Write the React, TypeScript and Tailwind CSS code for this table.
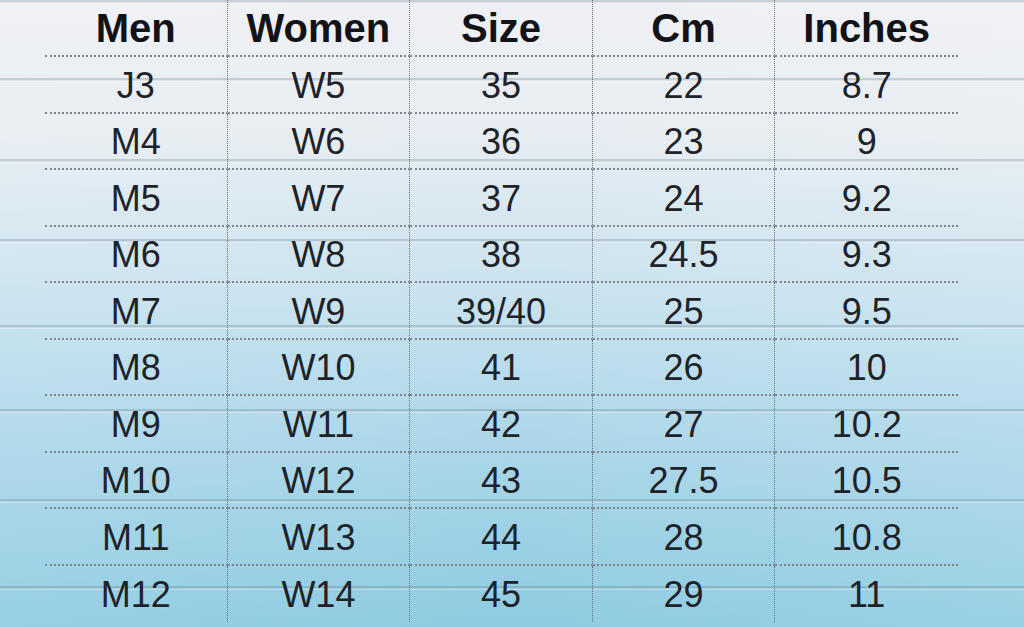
const headers = ['Men', 'Women', 'Size', 'Cm', 'Inches']

const rows = [
  ['J3', 'W5', '35', '22', '8.7'],
  ['M4', 'W6', '36', '23', '9'],
  ['M5', 'W7', '37', '24', '9.2'],
  ['M6', 'W8', '38', '24.5', '9.3'],
  ['M7', 'W9', '39/40', '25', '9.5'],
  ['M8', 'W10', '41', '26', '10'],
  ['M9', 'W11', '42', '27', '10.2'],
  ['M10', 'W12', '43', '27.5', '10.5'],
  ['M11', 'W13', '44', '28', '10.8'],
  ['M12', 'W14', '45', '29', '11'],
]

// plank seams of the painted wood behind the chart
const seams = [0, 78, 159, 239, 325, 409, 499, 586]

function Planks() {
  return (
    <svg className="absolute inset-0 h-full w-full" viewBox="0 0 1024 627" preserveAspectRatio="none" aria-hidden="true">
      <defs>
        <linearGradient id="wash" x1="0" y1="0" x2="0" y2="1">
          <stop offset="0" stopColor="#eff0f4" />
          <stop offset="0.22" stopColor="#e6edf2" />
          <stop offset="0.45" stopColor="#cbe3ef" />
          <stop offset="0.7" stopColor="#acd7e9" />
          <stop offset="1" stopColor="#8ecbe1" />
        </linearGradient>
        <linearGradient id="haze" x1="0" y1="0" x2="1" y2="0">
          <stop offset="0" stopColor="#ffffff" stopOpacity="0.08" />
          <stop offset="0.5" stopColor="#ffffff" stopOpacity="0" />
          <stop offset="1" stopColor="#ffffff" stopOpacity="0.1" />
        </linearGradient>
      </defs>
      <rect width="1024" height="627" fill="url(#wash)" />
      <rect width="1024" height="627" fill="url(#haze)" />
      {seams.map((y) => (
        <g key={y}>
          <rect x="0" y={y} width="1024" height="2.5" fill="#5f7684" opacity="0.28" />
          <rect x="0" y={y + 2.5} width="1024" height="1.5" fill="#ffffff" opacity="0.35" />
        </g>
      ))}
    </svg>
  )
}

export default function App() {
  return (
    <div className="relative h-[627px] w-[1024px] overflow-hidden font-['Liberation_Sans',Arial,sans-serif]">
      <Planks />
      <div className="relative ml-[45px] grid w-[913px] grid-cols-5">
        {headers.map((h, i) => (
          <div
            key={h}
            className={`flex h-[57px] items-center justify-center border-b-2 border-dotted border-b-[#7b858d] text-[40px] font-bold leading-none text-[#111317] ${
              i < 4 ? 'border-r border-r-[#66717a]' : ''
            }`}
          >
            {h}
          </div>
        ))}
        {rows.map((row, r) =>
          row.map((cell, i) => (
            <div
              key={`${r}-${i}`}
              className={`flex h-[56.5px] items-center justify-center pt-[3px] text-[36px] leading-none text-[#1e232a] ${
                r < rows.length - 1 ? 'border-b-2 border-dotted border-b-[#7b858d]' : 'border-dotted'
              } ${i < 4 ? 'border-r border-r-[#66717a]' : ''}`}
            >
              {cell}
            </div>
          )),
        )}
      </div>
    </div>
  )
}
